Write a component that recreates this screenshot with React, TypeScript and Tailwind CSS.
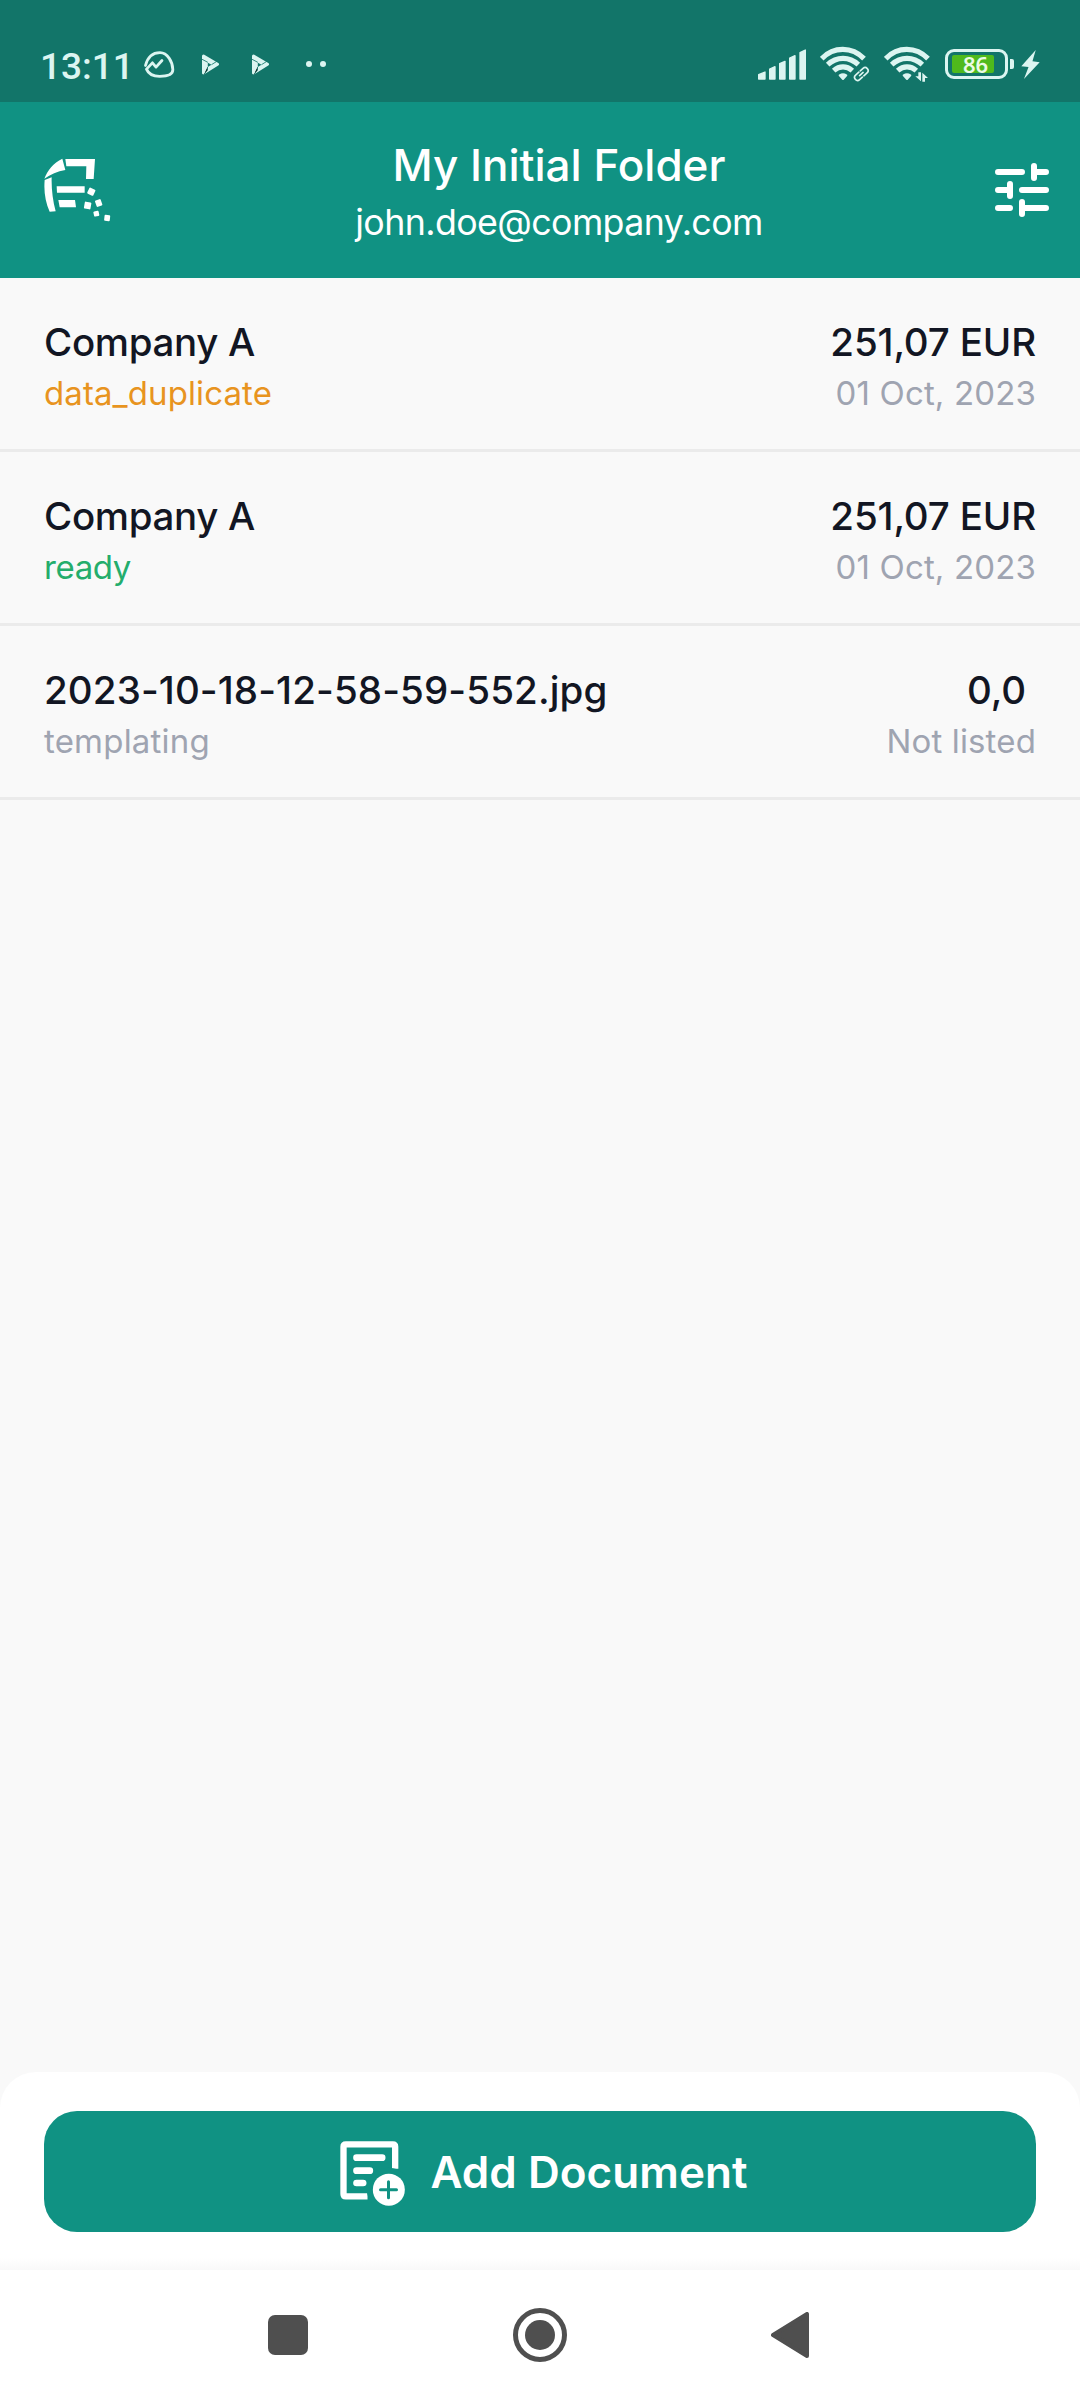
import { ReactNode } from 'react';

interface DocumentItem {
  id: number;
  name: string;
  nameClass: string;
  status: string;
  statusClass: string;
  amount: string;
  date: string;
}

const documents: DocumentItem[] = [
  {
    id: 1,
    name: 'Company A',
    nameClass: 'tracking-[-0.35px]',
    status: 'data_duplicate',
    statusClass: 'text-[#e8941f] tracking-[0.1px]',
    amount: '251,07 EUR',
    date: '01 Oct, 2023',
  },
  {
    id: 2,
    name: 'Company A',
    nameClass: 'tracking-[-0.35px]',
    status: 'ready',
    statusClass: 'text-[#24ad6c] tracking-[-0.4px]',
    amount: '251,07 EUR',
    date: '01 Oct, 2023',
  },
  {
    id: 3,
    name: '2023-10-18-12-58-59-552.jpg',
    nameClass: 'tracking-[0.11px]',
    status: 'templating',
    statusClass: 'text-[#9fa4b1] tracking-[0.2px]',
    amount: '0,0 ',
    date: 'Not listed',
  },
];

const ChatIcon = () => (
  <svg viewBox="428 88 96 88" className="w-8 h-[29px]" fill="none" stroke="currentColor" strokeWidth="8.5" strokeLinecap="round" strokeLinejoin="round">
    <path d="M435 135C442 108 459 96 479 96C502 96 518 125 518 148C518 162 500 168 478 168C456 168 443 158 438 146L456 127L467 140L485 120" />
  </svg>
);

const PlayIcon = () => (
  <svg viewBox="604 99 56 63" className="w-[19px] h-[21px]">
    <path d="M611 105L653 130L611 156Z" fill="currentColor" stroke="currentColor" strokeWidth="9" strokeLinejoin="round" />
    <path d="M624 125L635 131L624 138Z" fill="#127569" />
    <path d="M605 114L624 124M623 138V147L612 161M635 131L651 121" stroke="#127569" strokeWidth="2.5" />
  </svg>
);

const SignalIcon = () => (
  <svg viewBox="54 88 144 93" className="w-12 h-[31px]" fill="currentColor" stroke="currentColor" strokeWidth="4" strokeLinejoin="round">
    <path d="M56 165L75 157V178H56ZM89 148L105 141V178H89ZM119 132L135 125V178H119ZM149 115L165 108V178H149ZM180 99L196 91V178H180Z" />
  </svg>
);

const WifiIcon = ({ className, children }: { className: string; children: ReactNode }) => (
  <svg viewBox="240 80 150 108" className={className} fill="none" stroke="currentColor" strokeWidth="15.5">
    <path d="M245 118C281 81 336 81 372 118M263 136C290 111 328 111 355 136M281 154C298 139 320 139 337 154" />
    <path d="M299 168Q309 162 319 168L309 179Z" fill="currentColor" strokeWidth="6" strokeLinejoin="round" />
    {children}
  </svg>
);

const Battery = () => (
  <div className="flex items-center gap-[2px]">
    <div className="relative w-[63px] h-[30px] border-[3px] border-current rounded-[9px] p-[3px] pl-1">
      <div className="w-[42px] h-[18px] rounded-[2px] bg-[#4fba1c]" />
      <span className="absolute inset-0 flex items-center justify-center pr-[2px] font-['Noto_Sans',sans-serif] text-[22px] leading-none font-semibold text-[#eafbe4]">
        86
      </span>
    </div>
    <div className="w-1 h-[10px] rounded-r-[2px] bg-current" />
  </div>
);

const StatusBar = () => (
  <div className="flex items-center h-[102px] pt-[26px] pl-10 pr-10 bg-[#127569] text-[#dcf5f1]">
    <span className="w-[103px] pt-[5px] font-[Roboto,sans-serif] text-[37px] leading-none font-medium">13:11</span>
    <ChatIcon />
    <div className="flex items-center gap-[31px] ml-[26px]">
      <PlayIcon />
      <PlayIcon />
    </div>
    <div className="flex gap-2 ml-[36px]">
      <div className="size-[6px] rounded-full bg-current" />
      <div className="size-[6px] rounded-full bg-current" />
    </div>
    <div className="flex items-center ml-auto">
      <SignalIcon />
      <WifiIcon className="w-[50px] h-9 ml-[14px]">
        {/* chain link */}
        <g strokeWidth="5" transform="rotate(-42 364 164)">
          <path d="M362 155H349A9 9 0 0 0 349 173H360M366 173H379A9 9 0 0 0 379 155H368M357 164H371" strokeLinecap="round" />
        </g>
      </WifiIcon>
      <WifiIcon className="w-[50px] h-9 ml-[14px]">
        {/* up and down traffic arrows */}
        <path d="M343 159H351V186L334 171H343ZM355 187V160L372 176H363V187Z" fill="currentColor" stroke="none" />
      </WifiIcon>
      <div className="ml-[11px]">
        <Battery />
      </div>
      <svg viewBox="844 90 58 88" className="w-[19px] h-[29px] ml-[7px]" fill="currentColor">
        <path d="M889 90L845 139L867 142L853 178L901 127L879 124Z" />
      </svg>
    </div>
  </div>
);

const LogoIcon = () => (
  <svg viewBox="72 84 204 192" className="w-[68px] h-16" fill="currentColor">
    <path d="M73 146C82 122 100 98 127 86L136 120C112 124 92 134 73 146Z" />
    <path d="M136 87H225L221 147H198L199 109H139Z" />
    <path d="M74 150L95 142C94 175 98 210 107 244L89 245C76 215 71 185 74 150Z" />
    <path d="M110 169H194V188H111ZM115 210H165L168 232H119Z" />
    <rect x="204" y="175" width="20" height="20" rx="3" transform="rotate(25 214 185)" />
    <rect x="193" y="216" width="20" height="21" rx="3" transform="rotate(10 203 226)" />
    <rect x="227" y="209" width="18" height="20" rx="3" transform="rotate(-20 236 219)" />
    <rect x="221" y="243" width="16" height="16" rx="3" transform="rotate(-12 229 251)" />
    <rect x="253" y="255" width="17" height="18" rx="3" transform="rotate(6 262 264)" />
  </svg>
);

const FilterIcon = () => (
  <svg viewBox="0 0 54 54" className="size-[54px]" fill="none" stroke="currentColor" strokeWidth="6" strokeLinecap="round" strokeLinejoin="round">
    <path d="M3 9H27M39 3V15M39 9H51" />
    <path d="M3 27H15M15 21V33M27 27H51" />
    <path d="M3 45H15M27 39V51M27 45H51" />
  </svg>
);

const AddDocumentIcon = () => (
  <svg viewBox="61 96 194 195" className="size-[65px]" fill="none" stroke="currentColor">
    <path d="M226 179V113Q226 106 219 106H78Q71 106 71 113V255Q71 262 78 262H143" strokeWidth="19" />
    <path d="M110 146H187M110 185H150M110 222H130" strokeWidth="20" strokeLinecap="round" />
    <circle cx="207" cy="242" r="66" fill="#109283" stroke="none" />
    <circle cx="207" cy="242" r="48" fill="currentColor" stroke="none" />
    <path d="M182 242H230M206 218V266" stroke="#109283" strokeWidth="9" strokeLinecap="round" />
  </svg>
);

const Header = () => (
  <header className="flex items-center h-44 bg-[#109283] text-white">
    <button className="w-[138px] pl-11">
      <LogoIcon />
    </button>
    <div className="flex-1 flex flex-col items-center gap-[9px] pt-[2px] whitespace-nowrap">
      <h1 className="text-[44px] leading-[53px] font-medium">My Initial Folder</h1>
      <p className="text-[35.75px] leading-[43px] tracking-[-0.6px]">john.doe@company.com</p>
    </div>
    <button className="w-[100px] pl-[15px]">
      <FilterIcon />
    </button>
  </header>
);

const DocumentRow = ({ item }: { item: DocumentItem }) => (
  <li className="flex justify-between h-[174px] px-11 pt-[41px] border-b-[3px] border-[#ebebeb] whitespace-pre">
    <div className="flex flex-col gap-[7px]">
      <span className={`text-[38.5px] leading-[47px] font-medium text-[#121623] ${item.nameClass}`}>{item.name}</span>
      <span className={`text-[33px] leading-10 ${item.statusClass}`}>{item.status}</span>
    </div>
    <div className="flex flex-col gap-[7px] items-end">
      <span className="text-[38.5px] leading-[47px] font-medium tracking-[-0.15px] text-[#121623]">{item.amount}</span>
      <span className="text-[33px] leading-10 tracking-[0.15px] text-[#9fa4b1]">{item.date}</span>
    </div>
  </li>
);

const NavigationBar = () => (
  <nav className="flex items-center justify-between h-[130px] pl-[268px] pr-[271px] bg-white text-[#4f4f4f]">
    <div className="size-10 rounded-[7px] bg-current" />
    <div className="flex items-center justify-center size-[54px] rounded-full border-[5px] border-current">
      <div className="size-[30px] rounded-full bg-current" />
    </div>
    <svg viewBox="0 0 38 46" className="w-[38px] h-[46px]" fill="currentColor" stroke="currentColor" strokeWidth="4" strokeLinejoin="round">
      <path d="M2 23L36 2V44Z" />
    </svg>
  </nav>
);

export default function App() {
  return (
    <div className="flex flex-col w-[1080px] h-[2400px] bg-[#f9f9f9] font-[Inter,sans-serif]">
      <StatusBar />
      <Header />
      <ul className="flex-1">
        {documents.map((item) => (
          <DocumentRow key={item.id} item={item} />
        ))}
      </ul>
      <div className="h-[198px] px-11 pt-[39px] rounded-t-[36px] bg-linear-to-t from-[#f9f9f9] to-white to-6%">
        <button className="flex items-center justify-center gap-[25px] w-full h-[121px] pt-[3px] pl-2 rounded-[33px] bg-[#109283] text-white">
          <AddDocumentIcon />
          <span className="-mt-[2px] text-[44px] leading-[53px] font-semibold tracking-[0.05px]">Add Document</span>
        </button>
      </div>
      <NavigationBar />
    </div>
  );
}
